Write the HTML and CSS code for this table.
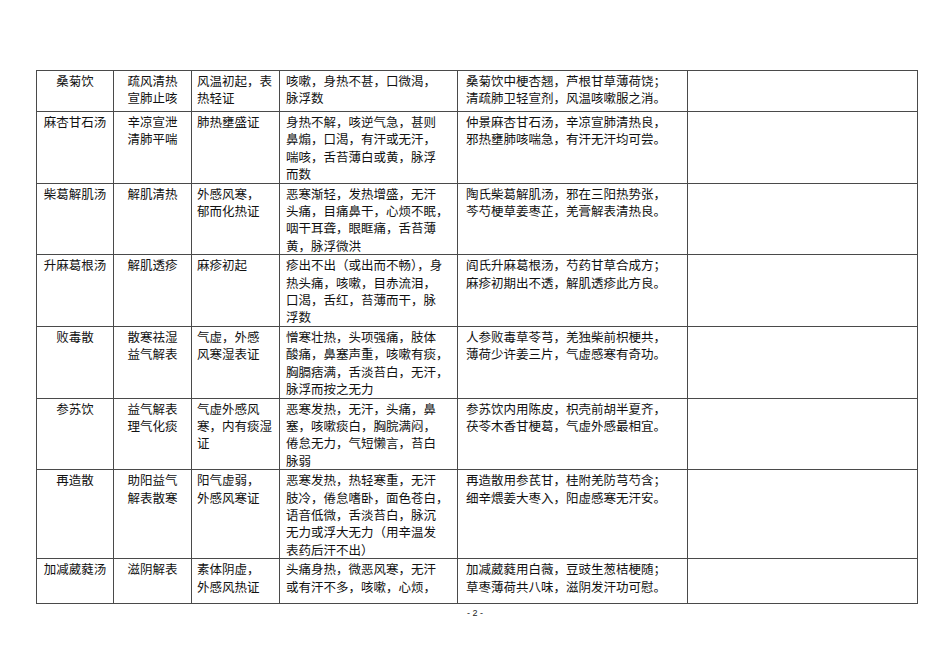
FILE: index.html
```html
<!DOCTYPE html>
<html lang="zh-CN">
<head>
<meta charset="utf-8">
<title>方剂表</title>
<link rel="stylesheet" href="styles.css">
</head>
<body>
<div class="page">
<table class="fang">
<colgroup>
<col class="c1"><col class="c2"><col class="c3"><col class="c4"><col class="c5"><col class="c6">
</colgroup>
<tbody>
<tr class="h42">
<td class="name">桑菊饮</td>
<td class="fa">疏风清热<br>宣肺止咳</td>
<td class="zheng">风温初起，表<br>热轻证</td>
<td class="sym">咳嗽，身热不甚，口微渴，<br>脉浮数</td>
<td class="ge">桑菊饮中梗杏翘，芦根甘草薄荷饶；<br>清疏肺卫轻宣剂，风温咳嗽服之消。</td>
<td class="blank"></td>
</tr>
<tr class="h72">
<td class="name">麻杏甘石汤</td>
<td class="fa">辛凉宣泄<br>清肺平喘</td>
<td class="zheng">肺热壅盛证</td>
<td class="sym">身热不解，咳逆气急，甚则<br>鼻煽，口渴，有汗或无汗，<br>喘咳，舌苔薄白或黄，脉浮<br>而数</td>
<td class="ge">仲景麻杏甘石汤，辛凉宣肺清热良，<br>邪热壅肺咳喘急，有汗无汗均可尝。</td>
<td class="blank"></td>
</tr>
<tr class="h70">
<td class="name">柴葛解肌汤</td>
<td class="fa">解肌清热</td>
<td class="zheng">外感风寒，<br>郁而化热证</td>
<td class="sym">恶寒渐轻，发热增盛，无汗<br>头痛，目痛鼻干，心烦不眠，<br>咽干耳聋，眼眶痛，舌苔薄<br>黄，脉浮微洪</td>
<td class="ge">陶氏柴葛解肌汤，邪在三阳热势张，<br>芩芍梗草姜枣芷，羌膏解表清热良。</td>
<td class="blank"></td>
</tr>
<tr class="h71">
<td class="name">升麻葛根汤</td>
<td class="fa">解肌透疹</td>
<td class="zheng">麻疹初起</td>
<td class="sym">疹出不出（或出而不畅），身<br>热头痛，咳嗽，目赤流泪，<br>口渴，舌红，苔薄而干，脉<br>浮数</td>
<td class="ge">阎氏升麻葛根汤，芍药甘草合成方；<br>麻疹初期出不透，解肌透疹此方良。</td>
<td class="blank"></td>
</tr>
<tr class="h71">
<td class="name">败毒散</td>
<td class="fa">散寒祛湿<br>益气解表</td>
<td class="zheng">气虚，外感<br>风寒湿表证</td>
<td class="sym">憎寒壮热，头项强痛，肢体<br>酸痛，鼻塞声重，咳嗽有痰，<br>胸膈痞满，舌淡苔白，无汗，<br>脉浮而按之无力</td>
<td class="ge">人参败毒草苓芎，羌独柴前枳梗共，<br>薄荷少许姜三片，气虚感寒有奇功。</td>
<td class="blank"></td>
</tr>
<tr class="h70">
<td class="name">参苏饮</td>
<td class="fa">益气解表<br>理气化痰</td>
<td class="zheng">气虚外感风<br>寒，内有痰湿<br>证</td>
<td class="sym">恶寒发热，无汗，头痛，鼻<br>塞，咳嗽痰白，胸脘满闷，<br>倦怠无力，气短懒言，苔白<br>脉弱</td>
<td class="ge">参苏饮内用陈皮，枳壳前胡半夏齐，<br>茯苓木香甘梗葛，气虚外感最相宜。</td>
<td class="blank"></td>
</tr>
<tr class="h90">
<td class="name">再造散</td>
<td class="fa">助阳益气<br>解表散寒</td>
<td class="zheng">阳气虚弱，<br>外感风寒证</td>
<td class="sym">恶寒发热，热轻寒重，无汗<br>肢冷，倦怠嗜卧，面色苍白，<br>语音低微，舌淡苔白，脉沉<br>无力或浮大无力（用辛温发<br>表药后汗不出）</td>
<td class="ge">再造散用参芪甘，桂附羌防芎芍含；<br>细辛煨姜大枣入，阳虚感寒无汗安。</td>
<td class="blank"></td>
</tr>
<tr class="h46">
<td class="name">加减葳蕤汤</td>
<td class="fa">滋阴解表</td>
<td class="zheng">素体阴虚，<br>外感风热证</td>
<td class="sym">头痛身热，微恶风寒，无汗<br>或有汗不多，咳嗽，心烦，</td>
<td class="ge">加减葳蕤用白薇，豆豉生葱桔梗随；<br>草枣薄荷共八味，滋阴发汗功可慰。</td>
<td class="blank"></td>
</tr>
</tbody>
</table>
<div class="pageno">- 2 -</div>
</div>
</body>
</html>
```

FILE: styles.css
```css
html, body {
  margin: 0;
  padding: 0;
  background: #ffffff;
}

.page {
  width: 950px;
  height: 672px;
  padding-top: 70px;
  box-sizing: border-box;
  font-family: "Noto Sans CJK SC", "Noto Sans", sans-serif;
  color: #111111;
}

.fang {
  margin-left: 36px;
  width: 881px;
  border-collapse: collapse;
  table-layout: fixed;
  font-size: 12.5px;
  line-height: 17.4px;
}

.c1 { width: 77px; }
.c2 { width: 78px; }
.c3 { width: 88px; }
.c4 { width: 178px; }
.c5 { width: 230px; }
.c6 { width: 230px; }

.fang td {
  border: 1px solid #4a4a4a;
  vertical-align: top;
  padding: 1px 0 0 0;
  white-space: nowrap;
  overflow: hidden;
}

.h42 { height: 41px; }
.h46 { height: 45px; }
.h70 { height: 69px; }
.h71 { height: 70px; }
.h72 { height: 71px; }
.h90 { height: 89px; }

.fang td.name,
.fang td.fa {
  text-align: center;
}

.fang td.zheng {
  padding-left: 5px;
}

.fang td.sym {
  padding-left: 6px;
}

.fang td.ge {
  padding-left: 8px;
}

.pageno {
  margin-top: 3px;
  text-align: center;
  font-family: "Liberation Sans", Arial, sans-serif;
  font-size: 9px;
  line-height: 12px;
  color: #222222;
}
```
